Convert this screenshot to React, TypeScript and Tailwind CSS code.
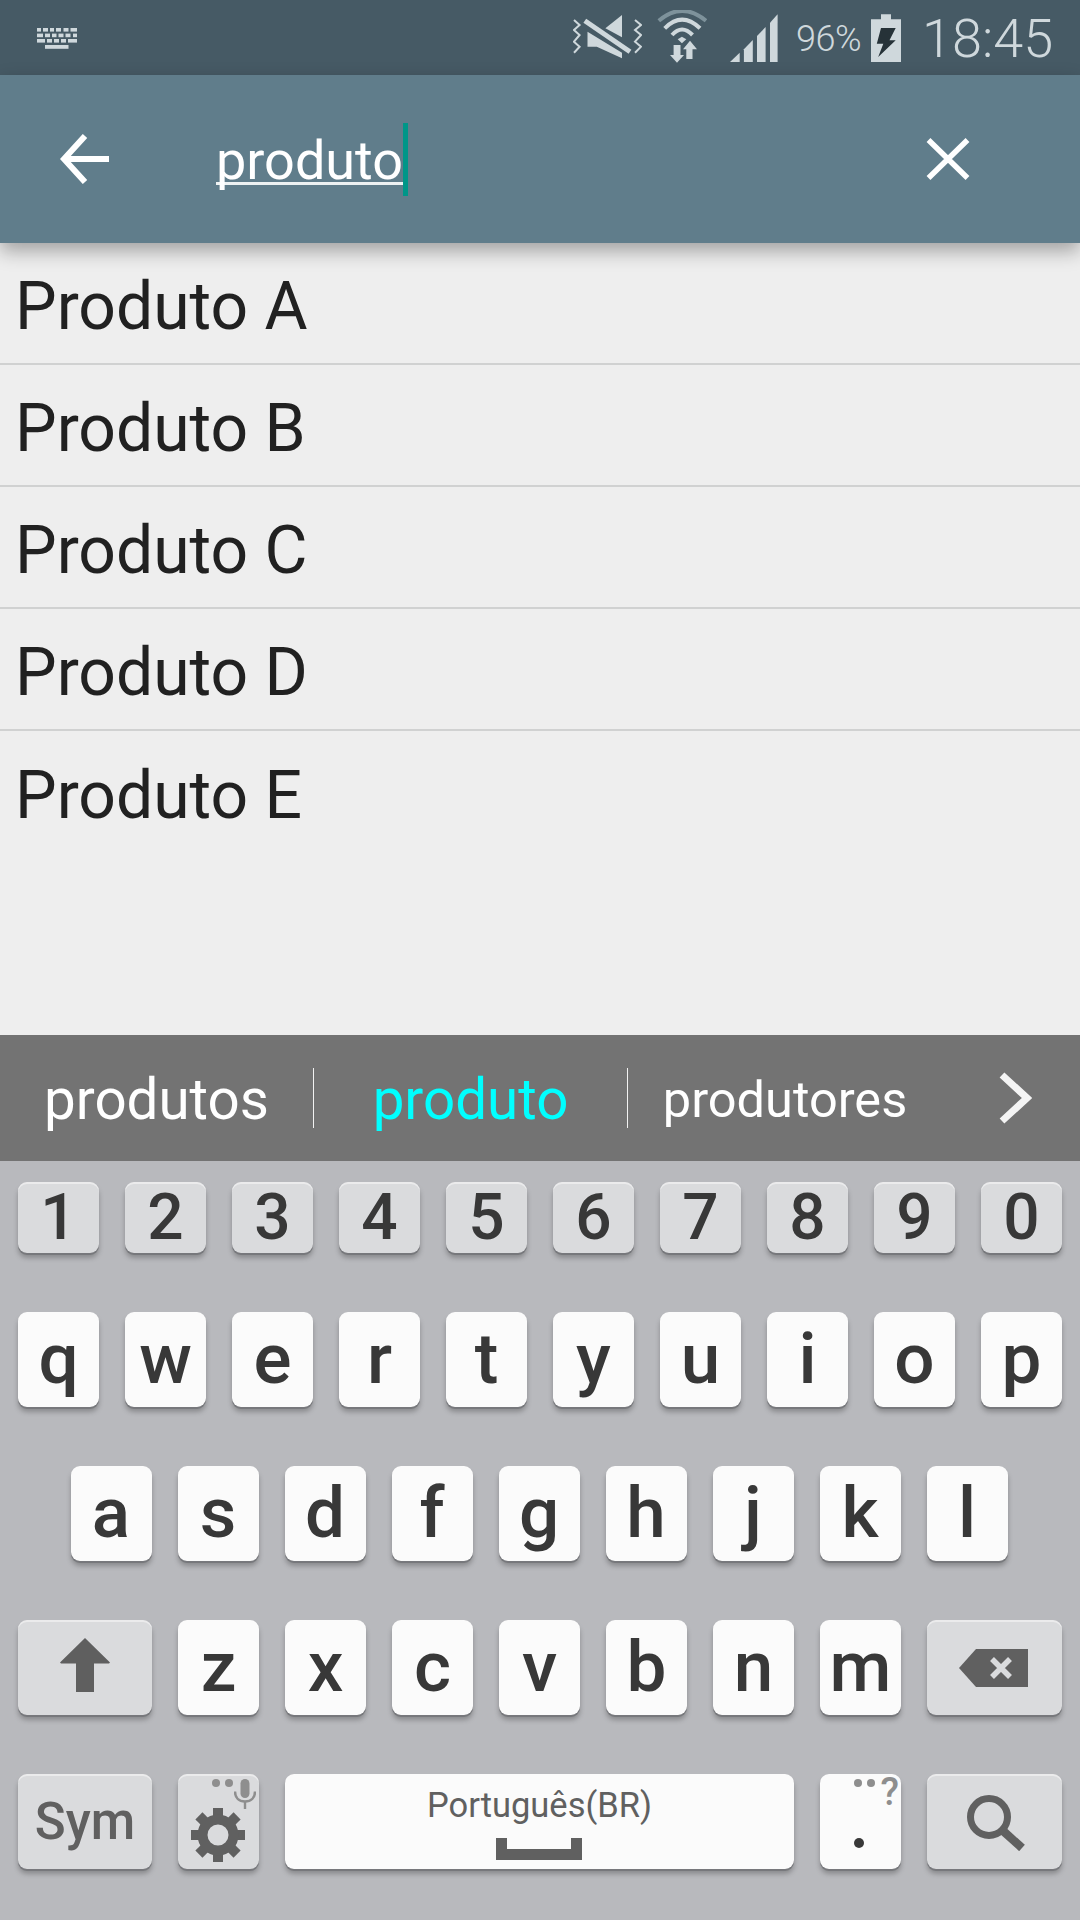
import React from "react";

const Key = ({ label, wide, grey, children, className = "" }: { label?: string; wide?: string; grey?: boolean; children?: React.ReactNode; className?: string }) => (
  <div
    className={`relative flex items-center justify-center rounded-[9px] ${wide ?? "w-[81px]"} ${
      grey
        ? "bg-[#dadbdd] shadow-[inset_0_2px_0_rgba(255,255,255,0.45),0_2px_0_#77787c,0_5px_5px_rgba(0,0,0,0.25)]"
        : "bg-[#fbfbfb] shadow-[0_2px_0_#77787c,0_5px_5px_rgba(0,0,0,0.25)]"
    } ${className}`}
  >
    {label}
    {children}
  </div>
);

const Row = ({ children, className = "" }: { children: React.ReactNode; className?: string }) => (
  <div className={`flex justify-center gap-[26px] ${className}`}>{children}</div>
);

const Item = ({ text, last }: { text: string; last?: boolean }) => (
  <div className={`flex h-[122px] items-center pl-[15px] pt-[7px] text-[66px] text-[#212121] ${last ? "" : "border-b-2 border-[#d0d1d1]"}`}>{text}</div>
);

const KeyboardIcon = () => (
  <svg width="40" height="21" viewBox="37 28 40 21" fill="#cfd8dc">
    {[[37,4],[43,5],[50,4],[56,5],[63.5,5],[70.5,6.5]].map(([x, w]) => <rect key={x} x={x} y="28" width={w} height="3.6" />)}
    {[[37,6],[45,5],[52,4.5],[58.5,5],[65.5,5],[73,4]].map(([x, w]) => <rect key={x} x={x} y="33.6" width={w} height="3.6" />)}
    {[[37,8],[47,5],[54,5],[61,5],[68,9]].map(([x, w]) => <rect key={x} x={x} y="39" width={w} height="3.6" />)}
    <rect x="45" y="45" width="23.5" height="3.8" />
  </svg>
);

const MuteIcon = () => (
  <svg width="69" height="44" viewBox="573 15 69 44" className="mt-[-2px]" fill="#cfd8dc">
    <polygon points="605.4,28.3 622,15 622,37.3" />
    <polygon points="587.5,31.7 587.5,46.7 596.8,46.7 622,58.3 622,52.7" />
    <line x1="584.8" y1="20.7" x2="630" y2="51.7" stroke="#cfd8dc" strokeWidth="5" />
    <polyline points="574,20 579.6,25 574,30 579.6,35 574,41.7 579.6,46.7 574,52.7" fill="none" stroke="#cfd8dc" strokeWidth="2" />
    <polyline points="635,20 641,25 635,30 641,35 635,41.7 641,46.7 635,52.7" fill="none" stroke="#cfd8dc" strokeWidth="2" />
  </svg>
);

const WifiIcon = () => (
  <svg width="50" height="53" viewBox="657 10 50 53">
    <path d="M658.8 20.7 Q682 1 706 20.7" fill="none" stroke="#7e929b" strokeWidth="4" />
    <path d="M664.7 28.3 Q682 11 700 28.3" fill="none" stroke="#cfd8dc" strokeWidth="4" />
    <path d="M672 35 Q682 24 692.5 35" fill="none" stroke="#cfd8dc" strokeWidth="4" />
    <g fill="#cfd8dc">
      <polygon points="677.7,39.3 681.9,36.7 686.3,39.3 681.9,43.3" />
      <polygon points="673.6,45 680.5,45 680.5,55 684,55 677,62.7 670,55 673.6,55" />
      <polygon points="686.3,59 692.5,59 692.5,49.3 697,49.3 690,40.7 683,49.3 686.3,49.3" />
    </g>
  </svg>
);

const SignalIcon = () => (
  <svg width="48" height="48" viewBox="730 13 48 48" fill="#cfd8dc">
    <polygon points="730,61 739.7,51.7 739.7,61" />
    <polygon points="743.9,61 743.9,48.3 752.8,39 752.8,61" />
    <polygon points="757,61 757,35 765.6,26 765.6,61" />
    <polygon points="770,61 770,21.7 777.6,13.3 777.6,61" />
  </svg>
);

const BatteryIcon = () => (
  <svg width="30" height="48" viewBox="871 12 30 48">
    <path d="M881 12.3h10v5h10V60H871V17.3h10z" fill="#cfd8dc" />
    <polygon points="881,26 895.7,26 889.5,38.3 895.7,38.3 878.2,55 883.3,41.7 876.8,41.7" fill="#263238" />
  </svg>
);

const Cog = () => {
  const teeth = [0, 45, 90, 135, 180, 225, 270, 315];
  return (
    <svg width="54" height="54" viewBox="-27 -27 54 54" fill="#606060">
      {teeth.map((a) => <rect key={a} x="-5" y="-27" width="10" height="14" transform={`rotate(${a})`} />)}
      <circle r="15.5" fill="none" stroke="#606060" strokeWidth="10" />
    </svg>
  );
};

export default function App() {
  const num = ["1", "2", "3", "4", "5", "6", "7", "8", "9", "0"];
  return (
    <div className="flex h-[1920px] w-[1080px] flex-col overflow-hidden bg-[#eeeeee] font-['Roboto',sans-serif]">
      <div className="flex h-[75px] shrink-0 items-center bg-[#465a65] pl-[37px]">
        <div className="mt-[2px]"><KeyboardIcon /></div>
        <div className="ml-[496px] flex items-center">
          <MuteIcon />
          <div className="ml-[15px] mt-[-2px]"><WifiIcon /></div>
          <div className="ml-[23px]"><SignalIcon /></div>
          <span className="ml-[18px] mt-[2px] w-[66px] text-[36px] font-light tracking-[-0.5px] whitespace-nowrap text-[#cfd8dc]">96%</span>
          <div className="ml-[9px]"><BatteryIcon /></div>
          <span className="ml-[21px] mt-[3px] text-[54px] leading-[60px] font-light text-[#cfd8dc]">18:45</span>
        </div>
      </div>

      <div className="relative z-10 flex h-[168px] shrink-0 items-center bg-[#607d8b] shadow-[0_8px_18px_rgba(0,0,0,0.32)]">
        <svg width="50" height="50" viewBox="60 134 50 50" className="ml-[60px]" fill="none" stroke="#fff" strokeWidth="6">
          <path d="M109 159H65" />
          <path d="M85 136L64 159L85 182" />
        </svg>
        <div className="ml-[106px] flex h-[73px] items-center">
          <span className="pt-[2px] text-[54px] leading-[73px] text-white underline decoration-[3px] underline-offset-[3px] decoration-[#eef2f3] [text-decoration-skip-ink:none]">produto</span>
          <span className="h-[73px] w-[5px] bg-[#009688]" />
        </div>
        <svg width="46" height="44" viewBox="925 137 46 44" className="ml-[517px]" fill="none" stroke="#fff" strokeWidth="5.5">
          <path d="M928.5 140L967.5 178M967.5 140L928.5 178" />
        </svg>
      </div>

      <div className="flex flex-1 flex-col">
        {["Produto A", "Produto B", "Produto C", "Produto D"].map((t) => <Item key={t} text={t} />)}
        <Item text="Produto E" last />
      </div>

      <div className="flex h-[126px] shrink-0 items-center bg-[#737373] pt-[4px]">
        <div className="flex w-[313px] justify-center text-[56.5px] text-white">produtos</div>
        <div className="mt-[-4px] h-[60px] w-[1px] bg-[#f2f2f2]" />
        <div className="flex w-[313px] justify-center text-[56.5px] text-[#00ffff]">produto</div>
        <div className="mt-[-4px] h-[60px] w-[1px] bg-[#f2f2f2]" />
        <div className="flex w-[314px] justify-center text-[50.5px] text-white">produtores</div>
        <svg width="34" height="52" viewBox="1000 1073 34 52" className="ml-[56px] mt-[-4px]" fill="none" stroke="#f4f4f4" strokeWidth="7">
          <path d="M1004 1076L1029 1099L1004 1122" />
        </svg>
      </div>

      <div className="flex h-[759px] shrink-0 flex-col bg-[#b8b9bd] pt-[21px] text-[#383838]">
        <Row className="h-[71px] text-[64px] font-medium">
          {num.map((n) => <Key key={n} label={n} grey />)}
        </Row>
        <Row className="mt-[59px] h-[95px] text-[71px] font-medium">
          {"qwertyuiop".split("").map((c) => <Key key={c} label={c} />)}
        </Row>
        <Row className="mt-[59px] h-[95px] pr-[2px] text-[71px] font-medium">
          {"asdfghjkl".split("").map((c) => <Key key={c} label={c} />)}
        </Row>
        <Row className="mt-[59px] h-[95px] text-[71px] font-medium">
          <Key wide="w-[134px]" grey>
            <svg width="52" height="55" viewBox="0 0 52 55" fill="#5f5f5f" className="mt-[-6px]">
              <path d="M26 1L51 25.5L50 26.5H35V55H17V26.5H2L1 25.5Z" />
            </svg>
          </Key>
          {"zxcvbnm".split("").map((c) => <Key key={c} label={c} />)}
          <Key wide="w-[135px]" grey>
            <svg width="70" height="38" viewBox="0 0 70 38" className="ml-[-1px]">
              <path d="M17 0H69V38H17L0 19Z" fill="#606060" />
              <path d="M33 10L51 28M51 10L33 28" stroke="#dadbdd" strokeWidth="5.5" />
            </svg>
          </Key>
        </Row>
        <Row className="mt-[59px] h-[95px]">
          <Key label="Sym" wide="w-[134px]" grey className="pt-[2px] text-[51px] font-medium text-[#606060]" />
          <Key grey>
            <span className="absolute left-[34px] top-[5px] h-[8px] w-[8px] rounded-full bg-[#8e8e8e]" />
            <span className="absolute left-[47px] top-[5px] h-[8px] w-[8px] rounded-full bg-[#8e8e8e]" />
            <svg width="22" height="30" viewBox="0 0 22 30" className="absolute right-[3px] top-[5px]" fill="#8e8e8e">
              <rect x="6.5" y="0" width="9" height="19" rx="4.5" />
              <path d="M1 12.5C1 19 5 22.5 11 22.5S21 19 21 12.5" fill="none" stroke="#8e8e8e" strokeWidth="2.5" />
              <rect x="9.8" y="22" width="2.4" height="8" />
            </svg>
            <div className="mt-[27px] ml-[-1px] flex"><Cog /></div>
          </Key>
          <Key wide="w-[509px]" className="flex-col">
            <span className="mt-[2px] text-[34.5px] leading-[38px] text-[#606060]">Português(BR)</span>
            <svg width="86" height="22" viewBox="0 0 86 22" fill="#606060" className="mt-[14px] mb-[-1px] ml-[-2px]">
              <path d="M0 0H11V11H75V0H86V22H0Z" />
            </svg>
          </Key>
          <Key>
            <span className="absolute left-[34px] top-[5px] h-[8px] w-[8px] rounded-full bg-[#8e8e8e]" />
            <span className="absolute left-[47px] top-[5px] h-[8px] w-[8px] rounded-full bg-[#8e8e8e]" />
            <span className="absolute right-[2px] top-[-4px] text-[38px] leading-[44px] font-medium text-[#8e8e8e]">?</span>
            <span className="mt-[43px] ml-[-3px] h-[10px] w-[10px] rounded-full bg-[#383838]" />
          </Key>
          <Key wide="w-[135px]" grey>
            <svg width="58" height="56" viewBox="0 0 58 56" fill="none" stroke="#606060" className="ml-[2px] mt-[2px]">
              <circle cx="22" cy="22" r="18.5" strokeWidth="7" />
              <path d="M34 34L55 53" strokeWidth="8.5" />
            </svg>
          </Key>
        </Row>
      </div>
    </div>
  );
}
